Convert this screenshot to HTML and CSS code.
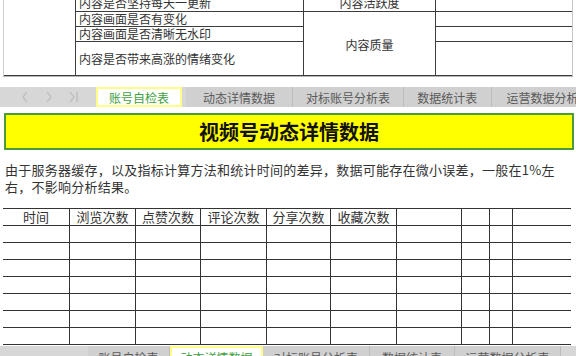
FILE: index.html
```html
<!DOCTYPE html>
<html lang="zh">
<head>
<meta charset="utf-8">
<link rel="stylesheet" href="styles.css">
</head>
<body>
<div class="page">
  <section class="shot shot-top">
    <div class="qgrid">
      <div class="qa"></div>
      <div class="qb row1 first"><span>内容是否坚持每天一更新</span></div>
      <div class="qc row1 first"><span>内容活跃度</span></div>
      <div class="qd row1"></div>
      <div class="qb row2">内容画面是否有变化</div>
      <div class="qc tall">内容质量</div>
      <div class="qd row2"></div>
      <div class="qb row3">内容画面是否清晰无水印</div>
      <div class="qd row3"></div>
      <div class="qb row4">内容是否带来高涨的情绪变化</div>
      <div class="qd row4"></div>
    </div>
    <div class="tabbar tabbar-top">
      <div class="nav">
        <svg width="8" height="12" viewBox="0 0 8 12"><polyline points="6,1 2,6 6,11" /></svg>
        <svg width="8" height="12" viewBox="0 0 8 12"><polyline points="2,1 6,6 2,11" /></svg>
        <svg width="10" height="12" viewBox="0 0 10 12"><polyline points="1,1 5,6 1,11" /><line x1="8" y1="1" x2="8" y2="11" /></svg>
      </div>
      <div class="tab active t1">账号自检表</div>
      <div class="tab t2">动态详情数据</div>
      <div class="tab t3">对标账号分析表</div>
      <div class="tab t4">数据统计表</div>
      <div class="tab t5">运营数据分析表</div>
    </div>
  </section>

  <section class="shot shot-bottom">
    <div class="title">视频号动态详情数据</div>
    <p class="note">由于服务器缓存，以及指标计算方法和统计时间的差异，数据可能存在微小误差，一般在1%左右，不影响分析结果。</p>
    <div class="data">
      <div class="h">时间</div><div class="h">浏览次数</div><div class="h">点赞次数</div><div class="h">评论次数</div><div class="h">分享次数</div><div class="h">收藏次数</div><div></div><div></div><div></div><div></div>
      <div></div><div></div><div></div><div></div><div></div><div></div><div></div><div></div><div></div><div></div>
      <div></div><div></div><div></div><div></div><div></div><div></div><div></div><div></div><div></div><div></div>
      <div></div><div></div><div></div><div></div><div></div><div></div><div></div><div></div><div></div><div></div>
      <div></div><div></div><div></div><div></div><div></div><div></div><div></div><div></div><div></div><div></div>
      <div></div><div></div><div></div><div></div><div></div><div></div><div></div><div></div><div></div><div></div>
      <div></div><div></div><div></div><div></div><div></div><div></div><div></div><div></div><div></div><div></div>
      <div></div><div></div><div></div><div></div><div></div><div></div><div></div><div></div><div></div><div></div>
    </div>
    <div class="tabbar tabbar-bottom">
      <div class="nav nav-b"></div>
      <div class="tab b1">账号自检表</div>
      <div class="tab active b2">动态详情数据</div>
      <div class="tab b3">对标账号分析表</div>
      <div class="tab b4">数据统计表</div>
      <div class="tab b5">运营数据分析表</div>
    </div>
  </section>
</div>
</body>
</html>
```

FILE: styles.css
```css
html, body {
  margin: 0;
  padding: 0;
  background: #ffffff;
  overflow: hidden;
}
.page {
  width: 576px;
  height: 356px;
  overflow: hidden;
  font-family: "Noto Sans CJK SC", "Noto Sans", sans-serif;
  color: #333333;
}

/* ---------- top screenshot ---------- */
.qgrid {
  display: grid;
  grid-template-columns: 72px 228px 132px 136px;
  grid-template-rows: 12px 15px 15px 34px;
  margin-left: 3px;
  width: 568px;
  border-left: 1px solid #cfcfcf;
  border-right: 1px solid #c4c4c4;
  border-bottom: 1px solid #b8b8b8;
  box-sizing: content-box;
  font-size: 12px;
}
.qgrid > div {
  box-sizing: border-box;
  border-bottom: 1px solid #3c3c3c;
  overflow: hidden;
  white-space: nowrap;
}
.qa {
  grid-column: 1;
  grid-row: 1 / 5;
  border-right: 1px solid #3c3c3c;
}
.qb { grid-column: 2; }
.qc { grid-column: 3; }
.qd { grid-column: 4; }
.row1 { grid-row: 1; }
.row2 { grid-row: 2; }
.row3 { grid-row: 3; }
.row4 { grid-row: 4; }
.qb {
  border-right: 1px solid #3c3c3c;
  padding-left: 3px;
  line-height: 14px;
  display: flex;
  align-items: center;
}
.qc {
  border-right: 1px solid #3c3c3c;
  display: flex;
  justify-content: center;
  align-items: center;
}
.qc.tall {
  grid-row: 2 / 5;
  padding-top: 2px;
}
.first span {
  display: block;
  line-height: 12px;
  margin-top: -3px;
}
.qb.first, .qc.first {
  align-items: flex-start;
}

.tabbar {
  display: flex;
  height: 20px;
  background: #d7d7d7;
  font-size: 12px;
  color: #5a5a5a;
}
.tabbar-top {
  margin-top: 10px;
}
.nav {
  width: 97px;
  display: flex;
  align-items: center;
  gap: 16px;
  padding-left: 21px;
  box-sizing: border-box;
}
.nav svg {
  fill: none;
  stroke: #b9b9b9;
  stroke-width: 1.2;
}
.tab {
  box-sizing: border-box;
  display: flex;
  align-items: center;
  justify-content: center;
  border-right: 1px solid #bdbdbd;
  white-space: nowrap;
  background: #d0d0d0;
  overflow: hidden;
}
.tab.active {
  background: #ffffff;
  border: 2px solid #ffff88;
  color: #3f9f3f;
}
.t1 { width: 86px; }
.t2 { width: 108px; margin-left: 4px; }
.t3 { width: 112px; }
.t4 { width: 88px; }
.t5 { width: 85px; justify-content: flex-start; padding-left: 15px; border-right: none; }

/* ---------- bottom screenshot ---------- */
.shot-bottom {
  padding-top: 6px;
}
.title {
  margin-left: 4px;
  width: 570px;
  height: 37px;
  box-sizing: border-box;
  border: 2px solid #4c9a3c;
  background: #ffff00;
  display: flex;
  align-items: center;
  justify-content: center;
  font-size: 20px;
  font-weight: bold;
  color: #111111;
}
.note {
  margin: 11px 0 0 5px;
  width: 556px;
  font-size: 13px;
  line-height: 17px;
  letter-spacing: 0.25px;
  color: #333333;
}
.data {
  margin: 13px 0 0 3px;
  width: 568px;
  display: grid;
  grid-template-columns: 66px 66px 65px 66px 64px 66px 65px 28px 23px 59px;
  grid-template-rows: 17px;
  grid-auto-rows: 17px;
  border-top: 1px solid #333333;
}
.data > div {
  box-sizing: border-box;
  border-bottom: 1px solid #333333;
  border-left: 1px solid #333333;
}
.data > div:nth-child(10n+1) {
  border-left: none;
}
.data .h {
  font-size: 13px;
  line-height: 15px;
  text-align: center;
  color: #333333;
  white-space: nowrap;
}
.tabbar-bottom {
  margin-top: 1px;
  align-items: stretch;
}
.nav-b {
  width: 88px;
}
.tabbar-bottom .tab {
  align-items: flex-start;
  padding-top: 3px;
}
.tabbar-bottom .tab.active {
  padding-top: 1px;
}
.b1 { width: 82px; }
.b2 { width: 93px; }
.b3 { width: 107px; }
.b4 { width: 85px; }
.b5 { width: 106px; }
```
